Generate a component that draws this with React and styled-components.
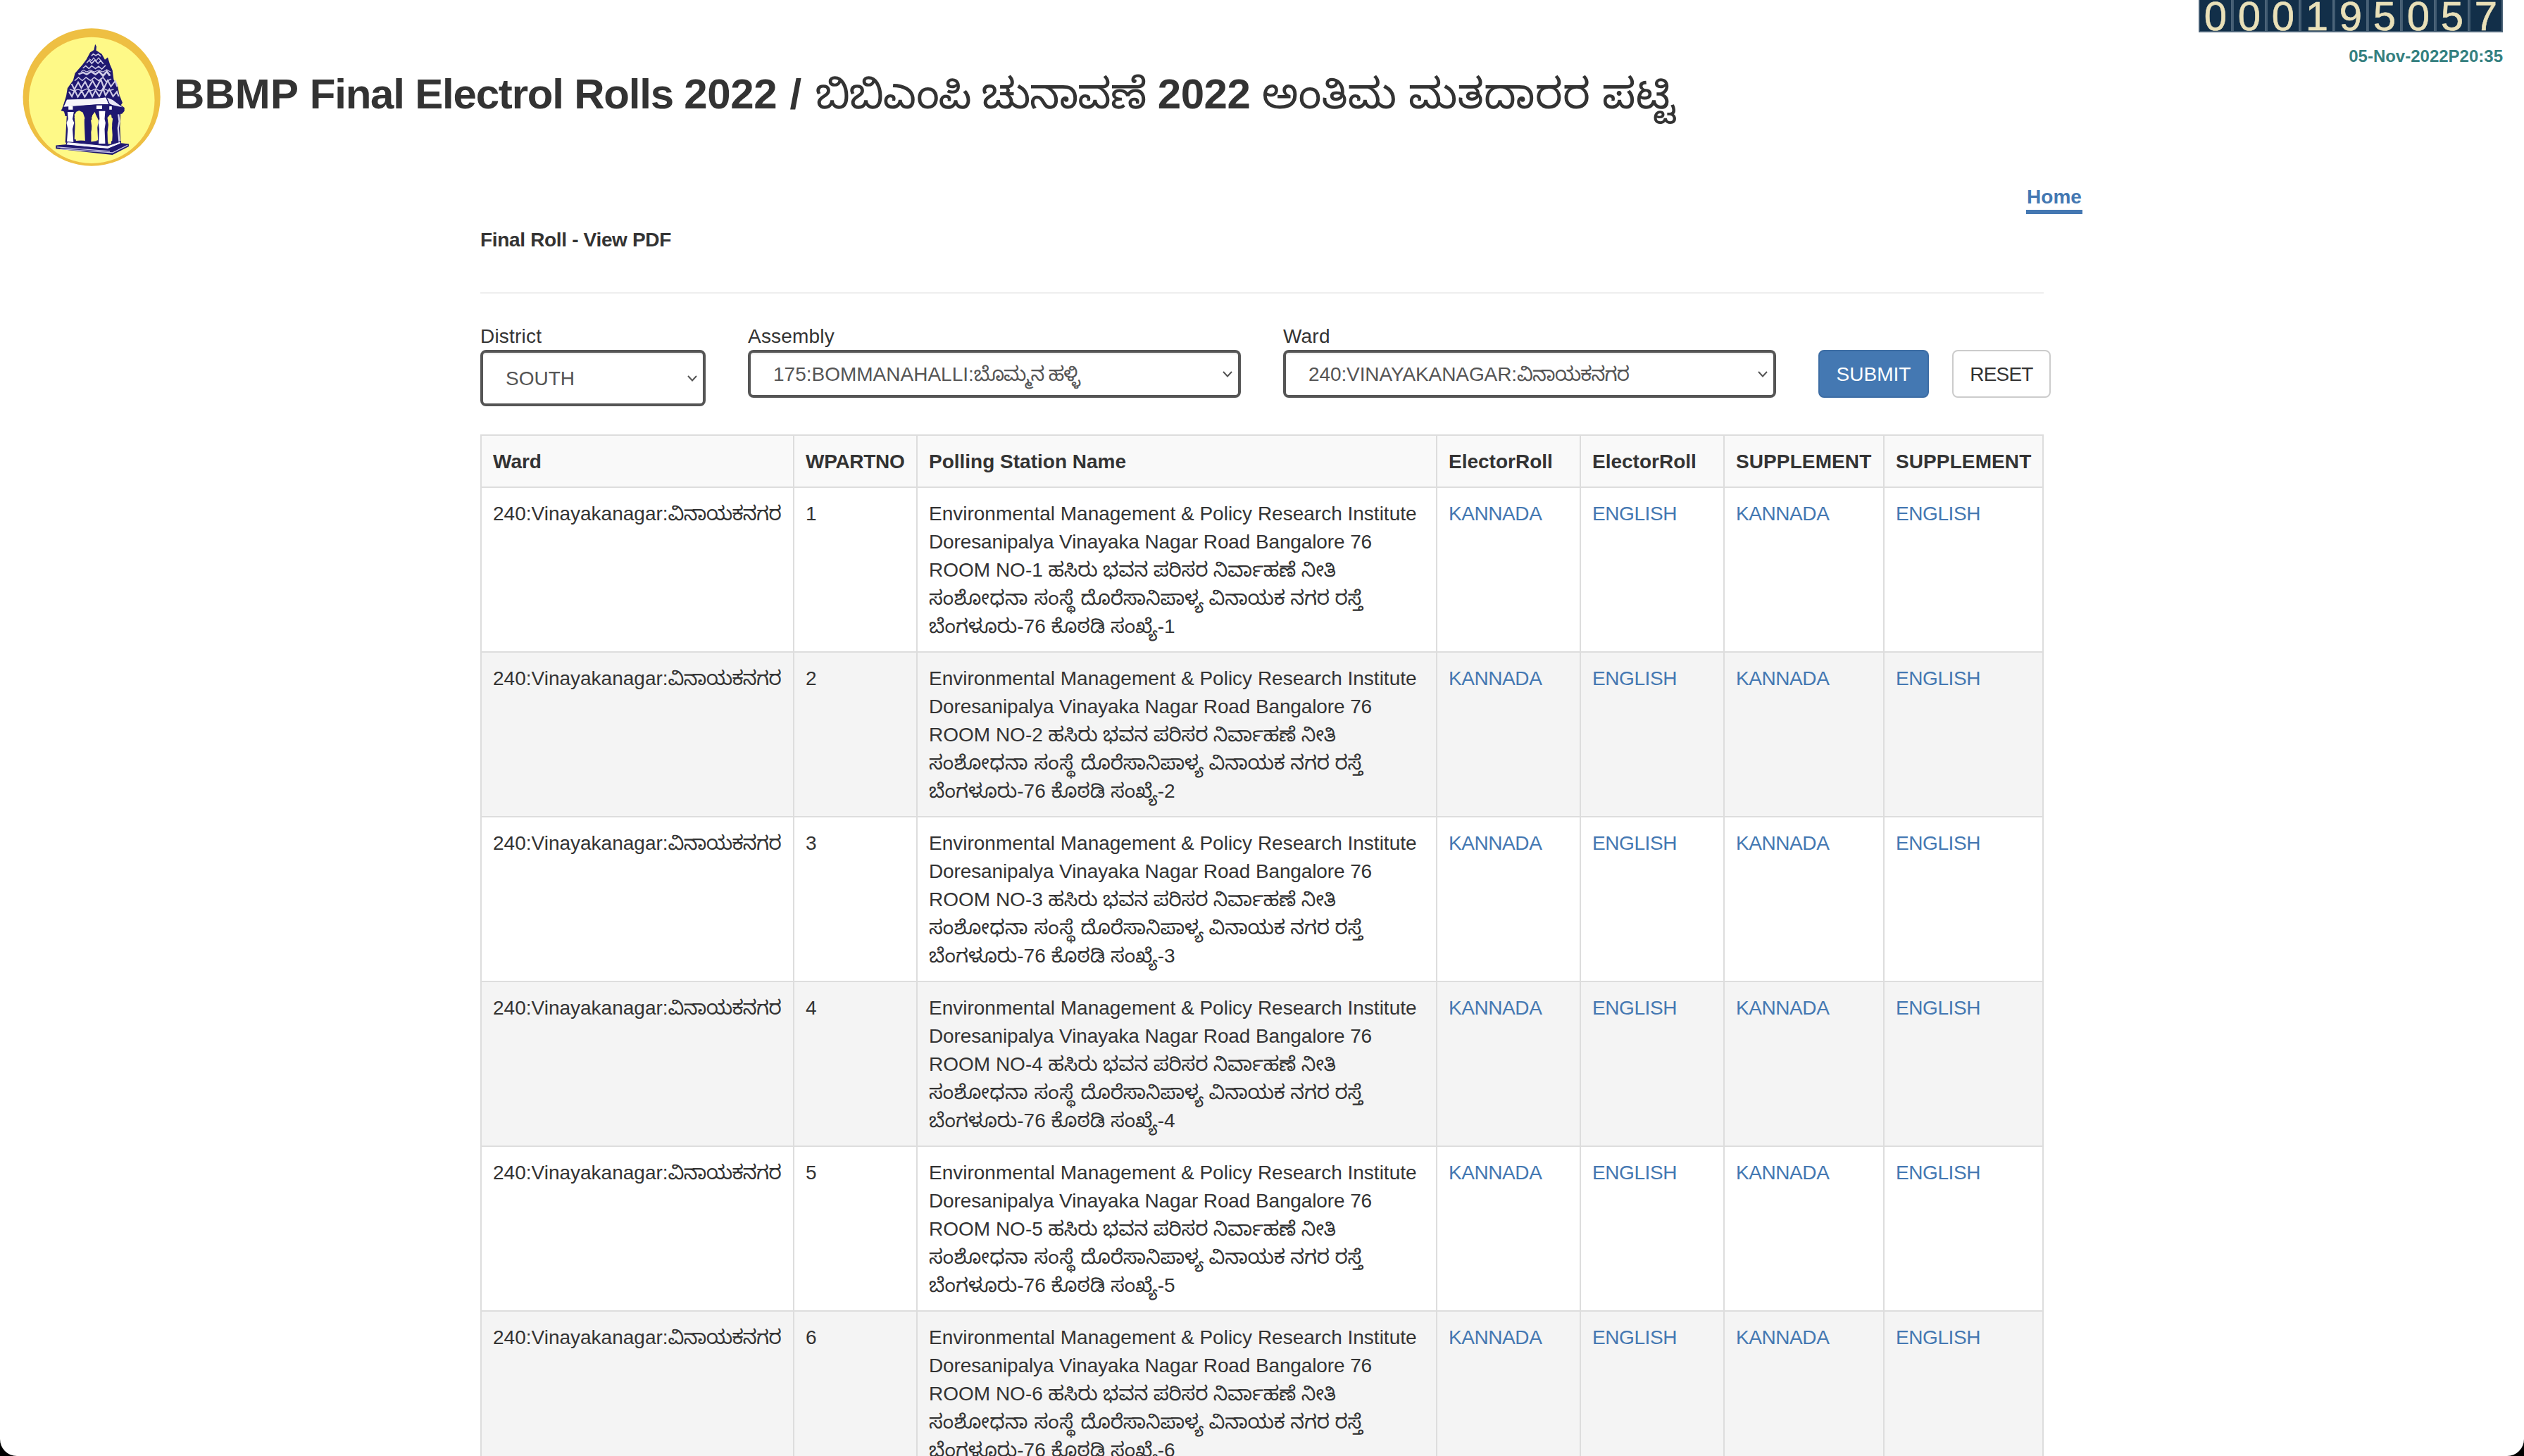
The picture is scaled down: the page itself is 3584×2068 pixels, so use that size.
import React from "react";
import styled, { createGlobalStyle } from "styled-components";

const GlobalStyle = createGlobalStyle`
  *, *::before, *::after { box-sizing: border-box; }
  html, body { margin: 0; padding: 0; background: #000; overflow: hidden; }
  body {
    font-family: "Liberation Sans", "Noto Sans Kannada", "Noto Sans", sans-serif;
    font-size: 28px;
    line-height: 40px;
    color: #333;
  }
`;

const Page = styled.div`
  height: 2068px;
  overflow: hidden;
  background: #fff;
  border-radius: 0 0 24px 24px;
`;

const Header = styled.header`
  display: flex;
  align-items: flex-start;
  height: 260px;
  padding: 0 30px 0 32px;
`;

const Logo = styled.svg`
  flex: none;
  width: 196px;
  height: 196px;
  margin-top: 40px;
`;

const Title = styled.h1`
  flex: 1;
  margin: 101px 0 0 19px;
  font-size: 60px;
  line-height: 66px;
  font-weight: 700;
  letter-spacing: -0.4px;
  white-space: nowrap;
`;

const Kannada = styled.span`
  font-weight: 400;
  letter-spacing: ${(p) => p.$spacing || 0}px;
`;

const Text = styled.span`
  letter-spacing: ${(p) => p.$spacing || 0}px;
`;

const Visits = styled.div`
  display: flex;
  flex-direction: column;
  align-items: flex-end;
`;

const Counter = styled.div`
  display: flex;
  height: 46px;
  border-bottom: 2px solid #4c6479;
`;

const Digit = styled.span`
  width: 48px;
  height: 44px;
  border-left: 2px solid #405a70;
  border-right: 2px solid #4c6479;
  background: #122f49;
  color: #e9e0b8;
  font-size: 58px;
  line-height: 46px;
  text-align: center;
  -webkit-text-stroke: 0.6px #e9e0b8;
`;

const Stamp = styled.div`
  margin-top: 14px;
  font-size: 24px;
  font-weight: 700;
  color: #35807f;
`;

const Main = styled.main`
  width: 2276px;
  margin-left: 682px;
`;

const Nav = styled.nav`
  display: flex;
  justify-content: flex-end;
  height: 60px;
`;

const HomeLink = styled.a`
  width: 80px;
  height: 44px;
  margin-right: 1px;
  text-align: center;
  border-bottom: 6px solid #4478b2;
  color: #4478b2;
  font-weight: 700;
`;

const Subtitle = styled.h2`
  margin: 0;
  width: 2220px;
  height: 97px;
  padding-top: 1px;
  border-bottom: 2px solid #eee;
  font-size: 28px;
  line-height: 40px;
  font-weight: 700;
  letter-spacing: -0.33px;
`;

const Filters = styled.form`
  display: flex;
  align-items: flex-start;
  height: 200px;
  padding-top: 40px;
`;

const Field = styled.div`
  width: ${(p) => p.$width}px;
  margin-right: 60px;
`;

const Label = styled.label`
  display: block;
  height: 40px;
  padding-top: 1px;
  letter-spacing: 0.2px;
`;

const Select = styled.div`
  display: flex;
  align-items: center;
  justify-content: space-between;
  height: ${(p) => p.$height || 68}px;
  padding: 1px 8px 0 32px;
  border: 4px solid #555;
  border-radius: 8px;
  box-shadow: inset 0 2px 2px rgba(0, 0, 0, 0.075);
  color: #555;
  white-space: nowrap;
`;

const Chevron = styled.svg`
  width: 14px;
  height: 9px;
  fill: none;
  stroke: #555;
  stroke-width: 2;
`;

const Button = styled.button`
  width: ${(p) => p.$width}px;
  height: 68px;
  margin: 40px 33px 0 0;
  padding: 2px 0 0;
  border: 2px solid ${(p) => (p.$primary ? "#3d6da4" : "#ccc")};
  border-radius: 8px;
  background: ${(p) => (p.$primary ? "#4478b2" : "#fff")};
  color: ${(p) => (p.$primary ? "#fff" : "#333")};
  font: inherit;
  letter-spacing: ${(p) => (p.$primary ? 0 : -0.8)}px;
`;

const Table = styled.table`
  width: 2220px;
  table-layout: fixed;
  border-collapse: collapse;
`;

const HeadCell = styled.th`
  height: 74px;
  padding: 17px 16px 15px;
  border: 2px solid #ddd;
  background: #f9f9f9;
  text-align: left;
  white-space: nowrap;
  letter-spacing: ${(p) => p.$spacing || 0}px;
`;

const Row = styled.tr`
  background: ${(p) => (p.$striped ? "#f4f4f4" : "#fff")};
`;

const Cell = styled.td`
  height: 234px;
  padding: 17px 16px 15px;
  border: 2px solid #ddd;
  vertical-align: top;
  white-space: nowrap;
`;

const Line = styled.div`
  height: 40px;
`;

const PdfLink = styled.a`
  color: #4478b2;
  letter-spacing: -0.42px;
`;

const COLUMNS = [
  ["Ward", 444],
  ["WPARTNO", 175, -0.3],
  ["Polling Station Name", 738],
  ["ElectorRoll", 204],
  ["ElectorRoll", 204],
  ["SUPPLEMENT", 227, 0.1],
  ["SUPPLEMENT", 226, 0.1],
];

const PARTS = [1, 2, 3, 4, 5, 6];
const LINKS = ["KANNADA", "ENGLISH", "KANNADA", "ENGLISH"];

function Emblem() {
  return (
    <Logo viewBox="72 122 439 586" preserveAspectRatio="none">
      <ellipse cx="291.8" cy="415" rx="218.5" ry="292" fill="#eebf42" />
      <ellipse cx="292" cy="428" rx="200" ry="268" fill="#fef987" />
      <path
        fill="#1f1870"
        d="M303 190l4 10-1 16 18 16 10 24 9-10 7 30 8 25 4 40 12 24 6 40 10 34-5 10H202l9-40 4-32 18-34 6-30 24-36 12-22 12-30 12-10z"
      />
      <g fill="none" stroke="#cfcbe6" strokeWidth="4">
        <path d="M291 240l6-8 8 6 8-6 8 10" />
        <path d="M284 252l8 8 6-12 8 12 8-12 8 14" strokeWidth="3" />
        <path d="M276 270l8-12 8 14 10-14 10 14 9-12 8 14" />
        <path d="M264 292l9-10 10 12 9-12 12 12 10-10 10 12 12-16" />
        <path d="M258 306l8-6 10 8 12-8 12 8 14-8 14 8 12-10 12 10" strokeWidth="3" />
        <path d="M250 318l14-8 12 8 14-12 14 12 12-12 12 18 12-18 10 18" strokeWidth="7" />
        <path d="M238 345l12-14 12 14 12-14 14 14 12-14 14 14 14-14 10 18 16-12" />
        <path d="M228 358l9 24 12-30 10 24 12-26 10 26 14-30 12 28 14-34 10 36 12-32 10 26 14-24 6 24" strokeWidth="5" />
        <path d="M222 382l14 6 12-6 14 6 14-8 14 8 14-8 14 8 14-8 14 8 16-6" strokeWidth="4" />
        <path d="M220 392l9 20 9-26 10 28 12-26 10 26 14-30 10 28 10-26 12 26 12-34 8 30 12-26 12 30 12-20 6 20" strokeWidth="5" />
      </g>
      <path fill="#f6f5fb" stroke="#1f1870" strokeWidth="3" d="M212 424l90-4 36-6 10 32-42 2-106 12z" />
      <path fill="#e8e6f5" stroke="#1f1870" strokeWidth="3" d="M338 414l22 12 34 34-18 2-28-18z" />
      <path fill="#1f1870" d="M202 456l106-10 40 0 48 14 0 14-8 12H368l-6 10-12-8-6 12h-36l-6-22-8 14-2 20h-26l-4-24-14-10-14 12-6 6h-20l-4-20-10-4z" />
      <path fill="#1f1870" d="M268 480h24l-3 30 3 28-2 66 22-4h-4l2-120h36l-4 24 4 30-2 80h10l3-80-3-54h30l-2 60 2 68-50 24-126-24 5-124h24l2 50-2 60 34 6-2-60z" />
      <path fill="#fef987" d="M242 478l10-6 12 8 6 24-4 20 3 30-3 44-24 2-3-40 3-30-5-28z" />
      <path fill="#fef987" d="M292 500l6-12 8 4 8 22-4 30 2 54-20 2-2-36 4-32z" />
      <path fill="#fef987" d="M343 500l6-6 10 12-3 30 2 40-1 24-14 8-1-44 3-30z" />
      <path fill="#fff" d="M218 454h14v14h-14zM215 478h20l-4 30 5 16-5 26 3 56h-21l3-56-4-26 5-16zM307 450h18v16h-18zM315 474h20l-2 34 3 16-3 26 2 62h-21l2-62-3-26 4-16zM348 454h8v14h-8z" />
      <path fill="none" stroke="#d9d6ee" strokeWidth="5" d="M377 488l3 30-4 28 4 60" />
      <path fill="#f3f2fa" stroke="#1f1870" strokeWidth="3" d="M214 605l128 16 42-18 0 10-40 22-134-16z" />
      <path fill="#1f1870" d="M178 620l30-4 134 18 44-24 24 4v10l-52 36-180-26z" />
      <path fill="none" stroke="#c9c5e6" strokeWidth="4" d="M182 627l168 18M192 635l166 16 48-32" />
    </Logo>
  );
}

function Dropdown({ label, width, height, children }) {
  return (
    <Field $width={width}>
      <Label>{label}</Label>
      <Select $height={height}>
        <span>{children}</span>
        <Chevron viewBox="0 0 14 9">
          <path d="M1 1l6 6.5L13 1" />
        </Chevron>
      </Select>
    </Field>
  );
}

export default function App() {
  return (
    <Page>
      <GlobalStyle />
      <Header>
        <Emblem />
        <Title>
          <Text $spacing={0.1}>BBMP </Text>
          <Text $spacing={-1.2}>Final Electrol Rolls </Text>
          2022<Text $spacing={1.5}> / </Text>
          <Kannada $spacing={-1.35}>ಬಿಬಿಎಂಪಿ ಚುನಾವಣೆ</Kannada> 2022{" "}
          <Kannada $spacing={0.1}>ಅಂತಿಮ ಮತದಾರರ ಪಟ್ಟಿ</Kannada>
        </Title>
        <Visits>
          <Counter>
            {"000195057".split("").map((d, i) => (
              <Digit key={i}>{d}</Digit>
            ))}
          </Counter>
          <Stamp>05-Nov-2022P20:35</Stamp>
        </Visits>
      </Header>
      <Main>
        <Nav>
          <HomeLink>Home</HomeLink>
        </Nav>
        <Subtitle>Final Roll - View PDF</Subtitle>
        <Filters>
          <Dropdown label="District" width={320} height={80}>
            SOUTH
          </Dropdown>
          <Dropdown label="Assembly" width={700}>
            175:BOMMANAHALLI:<Kannada $spacing={-1.1}>ಬೊಮ್ಮನ ಹಳ್ಳಿ</Kannada>
          </Dropdown>
          <Dropdown label="Ward" width={700}>
            <Text $spacing={-0.1}>240:VINAYAKANAGAR:</Text>
            <Kannada $spacing={-0.85}>ವಿನಾಯಕನಗರ</Kannada>
          </Dropdown>
          <Button type="button" $primary $width={157}>
            SUBMIT
          </Button>
          <Button type="button" $width={140}>
            RESET
          </Button>
        </Filters>
        <Table>
          <colgroup>
            {COLUMNS.map(([, width], i) => (
              <col key={i} width={width} />
            ))}
          </colgroup>
          <thead>
            <tr>
              {COLUMNS.map(([name, , spacing], i) => (
                <HeadCell key={i} $spacing={spacing}>
                  {name}
                </HeadCell>
              ))}
            </tr>
          </thead>
          <tbody>
            {PARTS.map((n) => (
              <Row key={n} $striped={n % 2 === 0}>
                <Cell>
                  240:Vinayakanagar:<Kannada $spacing={-0.65}>ವಿನಾಯಕನಗರ</Kannada>
                </Cell>
                <Cell>{n}</Cell>
                <Cell>
                  <Line>Environmental Management &amp; Policy Research Institute</Line>
                  <Line>
                    <Text $spacing={-0.12}>Doresanipalya Vinayaka Nagar Road Bangalore 76</Text>
                  </Line>
                  <Line>
                    ROOM NO-{n} <Kannada $spacing={-0.22}>ಹಸಿರು ಭವನ ಪರಿಸರ ನಿರ್ವಾಹಣೆ ನೀತಿ</Kannada>
                  </Line>
                  <Line>
                    <Kannada $spacing={0.5}>ಸಂಶೋಧನಾ ಸಂಸ್ಥೆ </Kannada>
                    <Kannada $spacing={-0.2}>ದೊರೆಸಾನಿಪಾಳ್ಯ ವಿನಾಯಕ ನಗರ ರಸ್ತೆ</Kannada>
                  </Line>
                  <Line>
                    <Kannada>ಬೆಂಗಳೂರು</Kannada>-76 <Kannada>ಕೊಠಡಿ ಸಂಖ್ಯೆ</Kannada>-{n}
                  </Line>
                </Cell>
                {LINKS.map((text, i) => (
                  <Cell key={i}>
                    <PdfLink>{text}</PdfLink>
                  </Cell>
                ))}
              </Row>
            ))}
          </tbody>
        </Table>
      </Main>
    </Page>
  );
}
